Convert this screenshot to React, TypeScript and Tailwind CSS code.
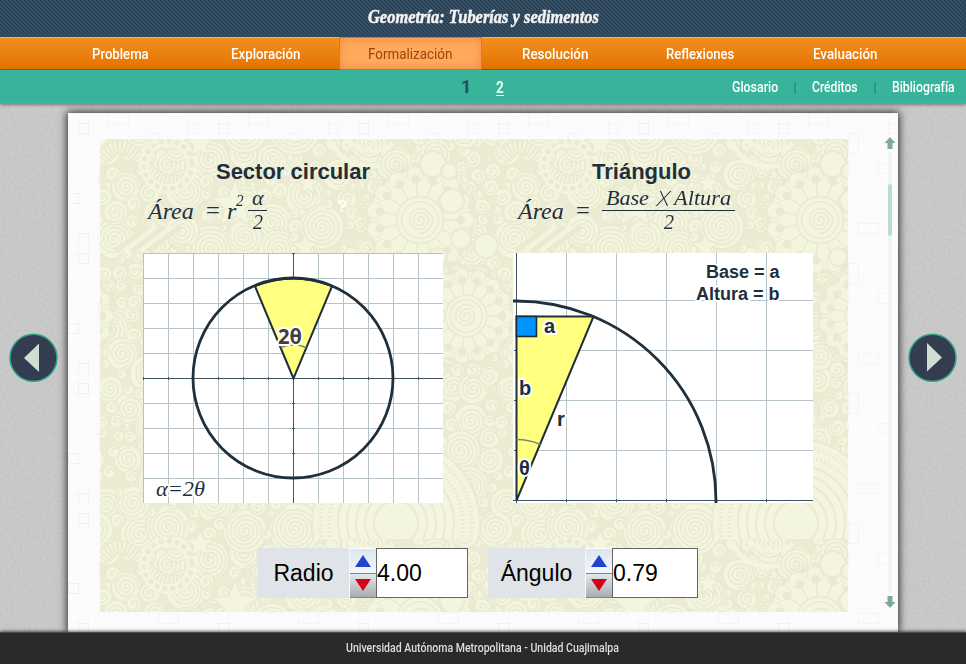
import { useLayoutEffect, useRef, useState, type ReactNode } from 'react';

/** Single-line text squeezed or stretched horizontally to a given width. */
function Fit({ w, className = '', children }: { w: number; className?: string; children: ReactNode }) {
  const ref = useRef<HTMLSpanElement>(null);
  const [scale, setScale] = useState(1);
  useLayoutEffect(() => {
    if (ref.current) setScale(w / ref.current.offsetWidth);
  }, [w]);
  return (
    <span className={`block whitespace-nowrap ${className}`} style={{ width: w }}>
      <span ref={ref} className="inline-block origin-left" style={{ transform: `scaleX(${scale})` }}>
        {children}
      </span>
    </span>
  );
}

const LIGHT = '#f4f5de';
const DARK = '#eaead2';

function spiral(x: number, y: number, r: number, step = 4.2) {
  let d = `M${x} ${y}`;
  const turns = r / step;
  for (let t = 0.3; t < turns; t += 0.08) {
    const a = t * Math.PI * 2;
    d += `L${(x + t * step * Math.cos(a)).toFixed(1)} ${(y + t * step * Math.sin(a)).toFixed(1)}`;
  }
  return d;
}

const PLACED: [number, number, number][] = [
  [68, 26, 17], [77, 10, 13], [145, 14, 16], [172, 20, 15], [143, 66, 21], [205, 57, 20], [172, 84, 20],
  [110, 110, 24], [26, 48, 15], [82, 92, 17], [335, 15, 16], [222, 88, 22], [178, 110, 19],
  [14, 100, 20], [28, 320, 14], [40, 395, 20], [68, 388, 22], [6, 365, 16], [195, 390, 26],
  [145, 392, 22], [102, 318, 13], [130, 340, 14], [240, 310, 18], [280, 350, 17], [195, 348, 17],
  [371, 282, 17], [390, 321, 14], [353, 248, 15], [373, 250, 15], [389, 237, 10], [318, 240, 14],
  [8, 190, 24], [22, 215, 16], [10, 250, 13], [30, 270, 16], [395, 390, 18], [365, 395, 14],
];

function buildCircles() {
  const out = [...PLACED];
  let seed = 17;
  const rnd = () => {
    seed = (seed * 16807) % 2147483647;
    return seed / 2147483647;
  };
  for (let i = 0; i < 4200; i++) {
    const x = rnd() * 400;
    const y = rnd() * 400;
    const r = (i < 700 ? 7 : 4) + rnd() * (i < 700 ? 15 : 5);
    const ok = out.every(([a, b, c]) => {
      const dx = Math.min(Math.abs(a - x), 400 - Math.abs(a - x));
      const dy = Math.min(Math.abs(b - y), 400 - Math.abs(b - y));
      return Math.hypot(dx, dy) > (c + r) * 0.8;
    });
    if (ok) out.push([x, y, r]);
  }
  return out;
}
const CIRCLES = buildCircles();

function star(x: number, y: number, r: number) {
  return Array.from({ length: 10 }, (_, i) => {
    const a = -Math.PI / 2 + (i * Math.PI) / 5;
    const q = i % 2 ? r * 0.45 : r;
    return `${(x + q * Math.cos(a)).toFixed(1)},${(y + q * Math.sin(a)).toFixed(1)}`;
  }).join(' ');
}

function Flower({ x, y, r }: { x: number; y: number; r: number }) {
  const n = 15;
  return (
    <g fill={LIGHT} stroke={DARK} strokeWidth="1.5">
      <circle cx={x} cy={y} r={r + 2} strokeWidth="4" />
      <circle cx={x} cy={y} r={r + 7} fill="none" strokeWidth="3" strokeDasharray="1.5 2" />
      {Array.from({ length: n }, (_, i) => {
        const a = (i * Math.PI * 2) / n;
        const c = Math.cos(a);
        const s = Math.sin(a);
        return (
          <g key={i}>
            <circle cx={x + r * 0.92 * c} cy={y + r * 0.92 * s} r={r * 0.16} strokeWidth="1" />
            <line x1={x + r * 0.45 * c} y1={y + r * 0.45 * s} x2={x + r * 0.8 * c} y2={y + r * 0.8 * s} />
            <circle cx={x + r * 0.82 * c} cy={y + r * 0.82 * s} r="3.4" fill={DARK} />
          </g>
        );
      })}
      <circle cx={x} cy={y} r={r * 0.47} />
      <circle cx={x} cy={y} r={r * 0.37} />
      <path d={spiral(x, y, r * 0.28)} fill="none" />
    </g>
  );
}

function Doodles() {
  return (
    <svg className="absolute inset-0 h-full w-full">
      <defs>
        <pattern id="doodle" width="400" height="400" patternUnits="userSpaceOnUse">
          <rect width="400" height="400" fill="#ececd5" />
          {[0, 400, -400].map((ox) =>
            [0, 400, -400].map((oy) => (
              <g key={`${ox},${oy}`} transform={`translate(${ox} ${oy})`}>
                {CIRCLES.map(([x, y, r], i) => (
                  <g key={i} stroke={DARK} strokeWidth="1.5">
                    <circle cx={x} cy={y} r={r} fill={LIGHT} />
                    <path d={spiral(x, y, Math.max(r - 2, 3))} fill="none" />
                  </g>
                ))}
              </g>
            )),
          )}
          <g fill="none">
            {[0, 1, 2, 3, 4].map((i) => (
              <path key={i} d={`M${48 + i * 8} 88l-32 24`} stroke={i % 2 ? LIGHT : DARK} strokeWidth="5" />
            ))}
            <path d="M0 22q20-28 40 0t50 18" stroke={DARK} strokeWidth="14" />
            <path d="M0 22q20-28 40 0t50 18" stroke={LIGHT} strokeWidth="11" strokeDasharray="2 2" />
            <circle cx="68" cy="26" r="24" stroke={LIGHT} strokeWidth="10" />
            <circle cx="68" cy="26" r="24" stroke={DARK} strokeWidth="5" strokeLinecap="round" strokeDasharray="0.1 8" />
            <circle cx="296" cy="384" r="84" fill={LIGHT} stroke={DARK} strokeWidth="2" />
            {[0, 1, 2, 3, 4, 5, 6].map((i) => (
              <circle
                key={i}
                cx="296"
                cy="384"
                r={22 + i * 9}
                stroke={DARK}
                strokeWidth={i > 4 ? 4 : 2}
                strokeDasharray={i > 4 ? '1.5 2.5' : undefined}
              />
            ))}
            <path d="M230 2q18 32 48 24M240-6q26 28 52 12" stroke={LIGHT} strokeWidth="5" />
            <path d="M160 286q20-18 38-4 20-10 36 2 24-14 40 4" stroke={DARK} strokeWidth="10" />
            <path d="M160 286q20-18 38-4 20-10 36 2 24-14 40 4" stroke={LIGHT} strokeWidth="7" />
          </g>
          <Flower x={320} y={81} r={50} />
          <Flower x={366} y={177} r={44} />
          <Flower x={-80} y={81} r={50} />
          <Flower x={-34} y={177} r={44} />
          {[[333, 25, 13], [352, 62, 12], [361, 100, 10], [338, 118, 9], [349, 32, 8], [386, 107, 12]].map(([x, y, r], i) => (
            <circle key={i} cx={x} cy={y} r={r} fill={LIGHT} stroke={DARK} strokeWidth="2" />
          ))}
          <g fill={LIGHT} stroke={DARK} strokeWidth="1.5">
            <polygon points={star(135, 66, 25)} />
            <polygon points={star(205, 108, 14)} />
            <polygon points={star(100, 5, 15)} />
            <polygon points={star(100, 405, 15)} />
            <polygon points={star(208, 45, 12)} />
          </g>
        </pattern>
      </defs>
      <rect width="100%" height="100%" fill="url(#doodle)" />
    </svg>
  );
}

function PaperTexture() {
  const blocks = [
    [10, 10, 10, 10], [40, 0, 20, 10], [80, 20, 10, 20], [30, 60, 10, 10], [110, 50, 20, 10], [60, 90, 10, 10],
    [10, 120, 10, 10], [90, 110, 20, 10], [130, 90, 10, 20], [0, 80, 10, 10], [70, 50, 10, 10], [120, 10, 10, 10],
  ];
  return (
    <svg className="absolute inset-0 h-full w-full">
      <defs>
        <pattern id="bricks" width="140" height="130" patternUnits="userSpaceOnUse">
          <rect width="140" height="130" fill="#fcfcfc" />
          <path
            d={Array.from({ length: 14 }, (_, i) => `M${i * 10 + 0.5} 0V130M0 ${i * 10 + 0.5}H140`).join('')}
            stroke="#f9f9f9"
          />
          {blocks.map(([x, y, w, h], i) => (
            <rect key={i} x={x + 0.5} y={y + 0.5} width={w} height={h} fill="none" stroke={i % 3 ? '#f5f5f5' : '#f0f0f0'} />
          ))}
        </pattern>
      </defs>
      <rect width="100%" height="100%" fill="url(#bricks)" />
    </svg>
  );
}

function Concrete() {
  return (
    <svg className="absolute inset-0 h-full w-full">
      <filter id="grain" x="0" y="0" width="100%" height="100%">
        <feTurbulence type="fractalNoise" baseFrequency="0.35" numOctaves="3" seed="4" />
        <feColorMatrix values="0 0 0 0 0.3  0 0 0 0 0.3  0 0 0 0 0.3  0.28 0 0 0 -0.1" />
      </filter>
      <rect width="100%" height="100%" filter="url(#grain)" />
    </svg>
  );
}

function Weave() {
  return (
    <svg className="absolute inset-0 h-full w-full">
      <defs>
        <pattern id="weave" width="4" height="4" patternUnits="userSpaceOnUse">
          <rect width="4" height="4" fill="#304a61" />
          <path d="M0 0h1v1h-1zM1 1h1v1h-1zM2 2h1v1h-1zM3 3h1v1h-1z" fill="#263c51" />
          <path d="M2 0h1v1h-1zM3 1h1v1h-1zM0 2h1v1h-1z" fill="#3a546a" />
        </pattern>
      </defs>
      <rect width="100%" height="100%" fill="url(#weave)" />
    </svg>
  );
}

const TABS = [
  { label: 'Problema', w: 57 },
  { label: 'Exploración', w: 69 },
  { label: 'Formalización', w: 84, active: true },
  { label: 'Resolución', w: 66 },
  { label: 'Reflexiones', w: 68 },
  { label: 'Evaluación', w: 64 },
];

const OUTLINED = 'stroke-white stroke-[4px] [paint-order:stroke] [stroke-linejoin:round]';

function SectorChart() {
  const ticks = Array.from({ length: 12 }, (_, i) => i * 25 + 0.5);
  return (
    <svg width="300" height="250" className="block bg-white">
      <path d={ticks.map((t) => `M${t} 0V250M0 ${t}H300`).join('')} stroke="#b6c3c8" />
      <path d="M150.5 0V250M0 125.5H300" stroke="#405660" />
      <path d={ticks.map((t) => `M${t} 124V127M149 ${t}H152`).join('')} stroke="#405660" />
      <path d="M150.5 125.5L112 33.2A100 100 0 0 1 189 33.2Z" fill="#ffff80" stroke="#1f2f3b" strokeWidth="2" />
      <path d="M137.8 94.5A33 33 0 0 1 163.2 94.5" fill="none" stroke="#808080" strokeWidth="1.5" />
      <circle cx="150" cy="125" r="100" fill="none" stroke="#1f2f3b" strokeWidth="2.8" />
      <text x="135" y="91" textLength="24" lengthAdjust="spacingAndGlyphs" className={`${OUTLINED} fill-[#404040] font-['Noto_Sans',sans-serif] text-[21px] font-bold`}>
        2θ
      </text>
      <text x="13" y="243" textLength="49" lengthAdjust="spacingAndGlyphs" className={`${OUTLINED} fill-[#1f2f3b] font-['Liberation_Serif',serif] text-[22px] italic`}>
        α=2θ
      </text>
    </svg>
  );
}

function TriangleChart() {
  return (
    <svg width="300" height="250" className="block bg-white">
      <path d="M53.5 0V250M103.5 0V250M153.5 0V250M203.5 0V250M253.5 0V250M3.5 47.5H300M3.5 97.5H300M3.5 147.5H300M3.5 197.5H300" stroke="#b6c3c8" />
      <path d="M3.5 0V250M0 247.5H300" stroke="#405660" />
      <path d="M53.5 246V249M103.5 246V249M153.5 246V249M203.5 246V249M253.5 246V249M1 97.5H5M1 147.5H5M1 197.5H5" stroke="#405660" />
      <path d="M3.5 247.5V63.5H80.5Z" fill="#ffff80" stroke="#1f2f3b" strokeWidth="2" />
      <rect x="3.5" y="63.5" width="20" height="20" fill="#0094ff" stroke="#1f2f3b" strokeWidth="1.6" />
      <path d="M3.5 186.5A61 61 0 0 1 27 191.2" fill="none" stroke="#808080" strokeWidth="1.5" />
      <circle cx="3" cy="248" r="200" fill="none" stroke="#1f2f3b" strokeWidth="2.8" />
      <g className={`${OUTLINED} fill-[#1f2f3b] font-['Liberation_Sans',sans-serif] text-[20px] font-bold`}>
        <text x="31" y="80">a</text>
        <text x="6" y="142">b</text>
        <text x="44" y="173">r</text>
        <text x="6" y="222">θ</text>
        <text x="193" y="25" className="text-[18px]">Base = a</text>
        <text x="183" y="47" className="text-[18px]">Altura = b</text>
      </g>
    </svg>
  );
}

function Spinner({ label, value, labelClass, inputClass }: { label: string; value: string; labelClass: string; inputClass: string }) {
  return (
    <div className="flex h-[50px] font-['Liberation_Sans',sans-serif] text-[23px] text-black">
      <div className={`flex items-center justify-center bg-[#e0e3e8] ${labelClass}`}>{label}</div>
      <div className="flex w-[27px] flex-col border-l border-[#f4f8fb]">
        <div className="flex h-[25px] items-center justify-center border-t border-white bg-linear-to-b from-[#dce5ee] to-[#f2f8fe]">
          <svg width="16" height="12"><path d="M8 0L16 12H0Z" fill="#2244cc" /></svg>
        </div>
        <div className="flex h-[25px] items-center justify-center border-y border-[#808488] bg-linear-to-b from-[#e3e8ec] to-[#a9adb3] pb-0.5">
          <svg width="16" height="12"><path d="M0 0H16L8 12Z" fill="#d60018" /></svg>
        </div>
      </div>
      <div className={`flex items-center border border-[#666] bg-white ${inputClass}`}>{value}</div>
    </div>
  );
}

function RoundArrow({ flip = false }: { flip?: boolean }) {
  return (
    <svg width="50" height="50" className="block">
      <circle cx="25.5" cy="24.8" r="23.5" fill="#343c50" stroke="#2fa58a" strokeWidth="1.5" />
      <path d={flip ? 'M20 10V38.5L35 24.5Z' : 'M31 10.5V39L16 25Z'} fill="#cddfd2" />
    </svg>
  );
}

export default function App() {
  return (
    <div className="flex h-[664px] w-[966px] flex-col overflow-hidden bg-[#cacaca] font-[Roboto,sans-serif]">
      <header className="relative flex h-[37px] shrink-0 justify-center">
        <Weave />
        <Fit w={231} className="relative h-[34px] font-['Liberation_Serif',serif] text-[19px] leading-[34px] font-bold text-[#f3f3f3] italic [-webkit-text-stroke:0.5px_#f3f3f3]">
          Geometría: Tuberías y sedimentos
        </Fit>
      </header>

      <nav className="flex h-[33px] shrink-0 border-t border-b border-t-[#f7b25c] border-b-[#b95600] bg-linear-to-b from-[#f08f1c] to-[#e57300] pl-[47.5px]">
        {TABS.map((t) =>
          t.active ? (
            <div key={t.label} className="flex w-[145px] justify-center">
              <div className="-my-px flex h-[33px] w-[143px] items-center justify-center border border-[#e37a10] bg-[#ffa95c] pt-px text-[#99460a] shadow-[inset_0_0_10px_#f38a42]">
                <Fit w={t.w} className="text-[15px]">{t.label}</Fit>
              </div>
            </div>
          ) : (
            <div key={t.label} className="flex w-[145px] items-center justify-center pt-px text-white">
              <Fit w={t.w} className="text-[15px] font-medium">{t.label}</Fit>
            </div>
          ),
        )}
      </nav>

      <div className="relative z-10 flex h-[34px] shrink-0 items-center border-b border-[#7b9c93] bg-[#38b49a] shadow-[0_1px_3px_rgba(0,0,0,0.4)]">
        <div className="flex w-[732px] gap-[25px] pl-[461px] text-[18px] leading-6">
          <Fit w={10} className="font-bold text-[#2d4a62]">1</Fit>
          <div className="flex h-6 items-start">
            <Fit w={8} className="h-[21px] border-b border-[#e8fbf4] text-[17px] font-bold text-[#e8fbf4]">2</Fit>
          </div>
        </div>
        <div className="flex items-center pt-0.5 text-[14px] font-medium text-white">
          <Fit w={46}>Glosario</Fit>
          <span className="mx-4 h-3 w-0.5 bg-[#329488]" />
          <Fit w={46}>Créditos</Fit>
          <span className="mx-4 h-3 w-0.5 bg-[#329488]" />
          <Fit w={63}>Bibliografía</Fit>
        </div>
      </div>

      <main className="relative flex min-h-0 flex-1">
        <Concrete />
        <div className="relative flex w-[68px] shrink-0 items-center pb-[20px] pl-[8px]"><RoundArrow /></div>
        <section className="relative mt-[9px] flex w-[830px] shrink-0 bg-white pt-[26px] pl-8 shadow-[0_0_8px_1px_rgba(0,0,0,0.8)]">
          <PaperTexture />
          <div className="relative h-[473px] w-[748px] overflow-hidden rounded-tl-lg">
            <Doodles />
            <div className="relative flex gap-[70px] pl-[43px] text-[#1f2f3b]">
              <div className="w-[300px]">
                <h2 className="pt-5 text-center font-['Liberation_Sans',sans-serif] text-[22px] leading-[26px] font-bold">Sector circular</h2>
                <div className="flex h-[68px] items-start pt-px pl-[5px] font-['Liberation_Serif',serif] text-[23px] leading-[26px] italic">
                  <Fit w={46} className="mt-3 text-[24px]">Área</Fit>
                  <Fit w={14} className="mt-3 ml-3 not-italic">=</Fit>
                  <span className="mt-3 ml-[7px] text-[24px]">r</span>
                  <Fit w={8} className="mt-0.5 text-[17px]">2</Fit>
                  <div className="ml-1 flex w-[19px] flex-col items-center">
                    <span className="h-[24px] text-[22px] leading-[24px]">α</span>
                    <span className="h-px w-full bg-[#1f2f3b]" />
                    <Fit w={10} className="-mt-0.5 text-[22px]">2</Fit>
                  </div>
                  <span className="mt-2 ml-[70px] font-['Liberation_Sans',sans-serif] text-[16px] font-bold text-white not-italic">?</span>
                </div>
                <SectorChart />
              </div>
              <div className="w-[300px]">
                <h2 className="pt-5 pr-[43px] text-center font-['Liberation_Sans',sans-serif] text-[22px] leading-[26px] font-bold">Triángulo</h2>
                <div className="flex h-[68px] items-start pt-px pl-[5px] font-['Liberation_Serif',serif] text-[23px] leading-[26px] italic">
                  <Fit w={46} className="mt-3 text-[24px]">Área</Fit>
                  <Fit w={14} className="mt-3 ml-3 not-italic">=</Fit>
                  <div className="ml-[12px] flex w-[133px] flex-col items-center">
                    <div className="flex h-[24px] gap-[8px] text-[22px] leading-[24px]">
                      <Fit w={43}>Base</Fit>
                      <Fit w={13} className="font-['Open_Sans',sans-serif] text-[21px] font-light">X</Fit>
                      <Fit w={57} className="-ml-1">Altura</Fit>
                    </div>
                    <span className="h-px w-full bg-[#1f2f3b]" />
                    <Fit w={10} className="-mt-0.5 text-[22px]">2</Fit>
                  </div>
                </div>
                <TriangleChart />
              </div>
            </div>
            <div className="relative mt-[45px] flex gap-5 pl-[158px]">
              <Spinner label="Radio" value="4.00" labelClass="w-[91px]" inputClass="w-[92px]" />
              <Spinner label="Ángulo" value="0.79" labelClass="w-[97px]" inputClass="w-[86px]" />
            </div>
          </div>
          <div className="relative -mt-[2px] ml-9 flex h-[471px] w-3 flex-col items-center">
            <svg width="12" height="12"><path d="M6 0L11.5 6H8.5V12H3.5V6H.5Z" fill="#80a8a1" /></svg>
            <div className="my-[3px] w-1 flex-1 bg-[#eff5f3] pt-8">
              <div className="h-[52px] rounded-sm bg-[#b9dccb]" />
            </div>
            <svg width="12" height="12"><path d="M6 12L.5 6H3.5V0H8.5V6H11.5Z" fill="#80a8a1" /></svg>
          </div>
        </section>
        <div className="relative flex flex-1 items-center pb-[20px] pl-[9px]"><RoundArrow flip /></div>
      </main>

      <footer className="relative flex h-8 shrink-0 items-center justify-center border-t border-[#4a4a4a] bg-[#2a2a2a] pr-px pb-0.5 text-[12px] font-medium text-[#dedede] shadow-[0_-1px_3px_rgba(0,0,0,0.6)]">
        <Fit w={273}>Universidad Autónoma Metropolitana - Unidad Cuajimalpa</Fit>
      </footer>
    </div>
  );
}
